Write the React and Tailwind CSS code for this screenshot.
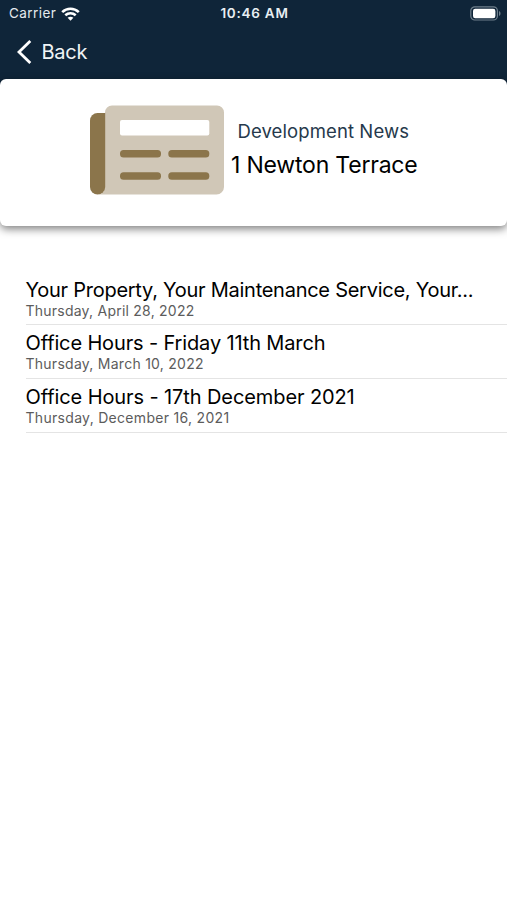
const news = [
  { title: 'Your Property, Your Maintenance Service, Your...', date: 'Thursday, April 28, 2022', pad: 'pt-[7px]', track: 'tracking-[-0.26px]', dateTrack: 'tracking-[0.23px]' },
  { title: 'Office Hours - Friday 11th March', date: 'Thursday, March 10, 2022', pad: 'pt-[6px]', track: 'tracking-[-0.14px]', dateTrack: 'tracking-[0.26px]' },
  { title: 'Office Hours - 17th December 2021', date: 'Thursday, December 16, 2021', pad: 'pt-[6px]', track: 'tracking-[-0.1px]', dateTrack: 'tracking-[0.3px]' },
];

function WifiIcon() {
  return (
    <svg className="ml-[5px] h-[14px] w-[19px]" viewBox="0 0 19 14" fill="none" stroke="#fff" strokeWidth="2.6">
      <path d="M1.2 5.1C6 .6 13 .6 17.8 5.1" />
      <path d="M4.3 8.3c3-2.7 7.4-2.7 10.4 0" />
      <path d="M9.5 13.7 6.6 10.8c1.7-1.4 4.1-1.4 5.8 0Z" fill="#fff" stroke="none" />
    </svg>
  );
}

function BatteryIcon() {
  return (
    <svg className="h-[15px] w-[32px]" viewBox="0 0 32 15">
      <rect x=".8" y=".8" width="26.6" height="13.2" rx="4" fill="none" stroke="#6f7f8c" strokeWidth="1.2" />
      <rect x="3" y="2.8" width="22.4" height="9.4" rx="2.2" fill="#fff" />
      <path d="M29 5c2 .7 2 4.3 0 5Z" fill="#6f7f8c" />
    </svg>
  );
}

function NewspaperIcon() {
  return (
    <svg className="h-[90px] w-[135px] shrink-0" viewBox="0 0 135 90">
      <path d="M22 .5H127a7 7 0 0 1 7 7V82a7.5 7.5 0 0 1-7.5 7.500H8.500Q15 88 15 81V7.500a7 7 0 0 1 7-7Z" fill="#d0c7b7" />
      <path d="M15.200 8H7.500A7.500 7.500 0 0 0 0 15.500V82a7.600 7.600 0 0 0 15.200 0Z" fill="#8b754b" />
      <rect x="30" y="15" width="89.300" height="15.500" rx="2" fill="#fff" />
      <g fill="#8b754b">
        <rect x="30" y="45" width="41" height="7.600" rx="3.500" />
        <rect x="78.300" y="45" width="41" height="7.600" rx="3.500" />
        <rect x="30" y="67.200" width="41" height="7.600" rx="3.500" />
        <rect x="78.300" y="67.200" width="41" height="7.600" rx="3.500" />
      </g>
    </svg>
  );
}

export default function App() {
  return (
    <div className="h-[900px] w-full overflow-hidden bg-white font-['Inter',sans-serif] text-black">
      <header className="h-[86px] bg-[#0f2539] text-white">
        <div className="grid h-[27px] grid-cols-[1fr_auto_1fr] items-center pr-[7px] pl-[9px] text-[13.5px]">
          <div className="flex items-center">
            <span className="tracking-[0.45px] text-[#e4eaee]">Carrier</span>
            <WifiIcon />
          </div>
          <span className="font-semibold tracking-[0.75px] text-[#e8eef2]">10:46 AM</span>
          <div className="-mr-[2px] flex justify-end">
            <BatteryIcon />
          </div>
        </div>
        <div className="flex h-[50px] items-center pl-[17px]">
          <svg className="h-[24px] w-[15px]" viewBox="0 0 15 24" fill="none" stroke="#fff" strokeWidth="2.8">
            <path d="M13.3 1 2 12l11.300 11" />
          </svg>
          <span className="ml-[9.5px] text-[20px] tracking-[-0.25px] text-[#f0f4f6]">Back</span>
        </div>
      </header>

      <section className="-mt-[7px] flex h-[147px] rounded-[6px] bg-white pt-[26px] pl-[90px] shadow-[0_3px_8px_rgba(0,0,0,0.5)]">
        <NewspaperIcon />
        <div className="ml-[6px] whitespace-nowrap">
          <p className="mt-[14px] ml-[6.5px] text-[18.5px] leading-[24px] tracking-[0.1px] text-[#26394c]">Development News</p>
          <h1 className="mt-[6px] text-[23px] leading-[32px] tracking-[-0.2px]">1 Newton Terrace</h1>
        </div>
      </section>

      <ul className="mt-[45px] ml-[25.5px]">
        {news.map((item) => (
          <li key={item.title} className={`h-[54px] border-b border-[#e4e4e4] whitespace-nowrap ${item.pad}`}>
            <h2 className={`text-[20px] leading-[24px] ${item.track}`}>{item.title}</h2>
            <p className={`text-[14px] leading-[18px] text-[#5c5c5c] ${item.dateTrack}`}>{item.date}</p>
          </li>
        ))}
      </ul>
    </div>
  );
}
